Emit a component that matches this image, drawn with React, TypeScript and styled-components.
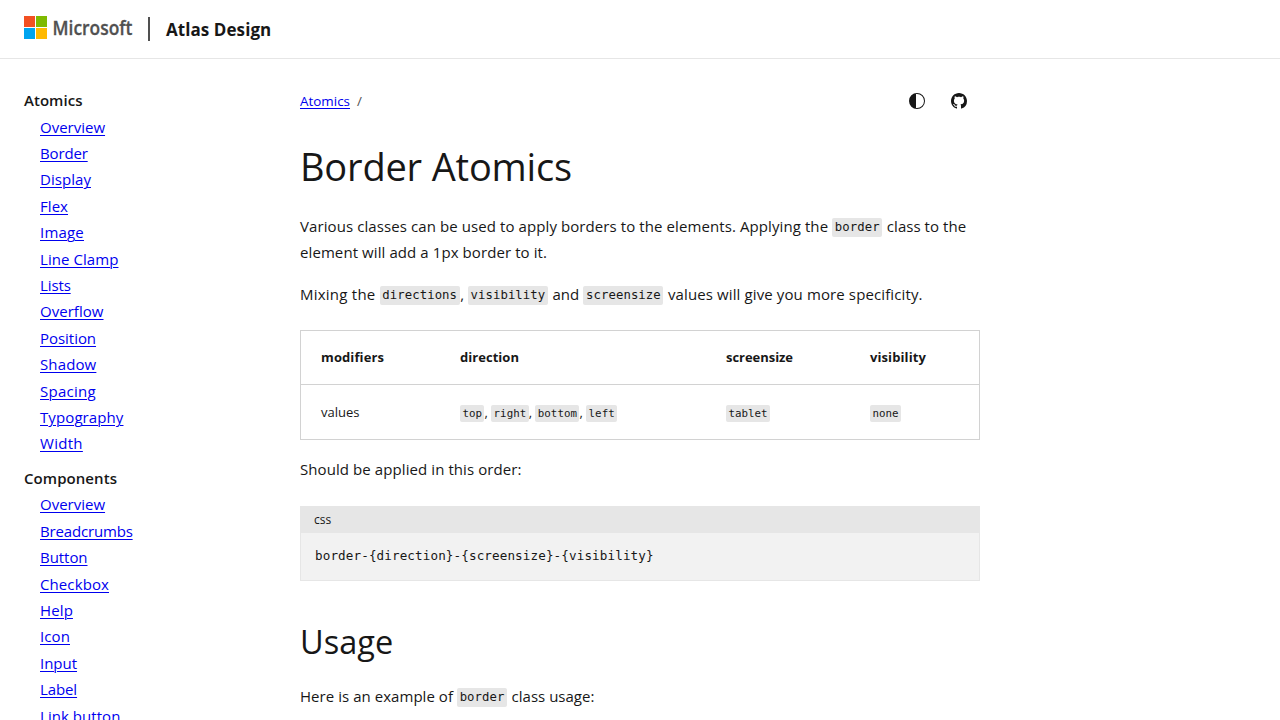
import React from 'react';
import styled, { createGlobalStyle } from 'styled-components';

const GlobalStyle = createGlobalStyle`
  *, *::before, *::after { box-sizing: border-box; }
  html { overflow: hidden; }
  body {
    margin: 0;
    height: 720px;
    overflow: hidden;
    background: #fff;
    color: #171717;
    font: 400 15px/26.4px "Open Sans", "Noto Sans", sans-serif;
  }
`;

const Track = styled.span<{ $ls: number }>`
  letter-spacing: ${(p) => p.$ls}px;
`;

const Header = styled.header`
  display: flex;
  align-items: center;
  height: 59px;
  padding: 0 24px;
  border-bottom: 1px solid #e6e6e6;
`;

const Logo = styled.svg`
  display: block;
  width: 109px;
  height: 24px;
  margin-bottom: 3px;
  overflow: visible;
`;

const Divider = styled.span`
  width: 2px;
  height: 24px;
  margin: 0 16px 0 15px;
  background: #505050;
`;

const SiteName = styled.span`
  padding-top: 3px;
  font-size: 17px;
  font-weight: 700;
  letter-spacing: 0.07px;
`;

const Body = styled.div`
  display: flex;
`;

const Sidebar = styled.nav`
  width: 300px;
  padding: 28.2px 24px 0;
`;

const SectionTitle = styled.div<{ $ls: number }>`
  font-weight: 600;
  letter-spacing: ${(p) => p.$ls}px;
`;

const LinkList = styled.ul`
  margin: 0 0 8px;
  padding: 0 0 0 16px;
  list-style: none;
`;

const Link = styled.a<{ $ls?: number; $small?: boolean }>`
  color: #0000ee;
  font-size: ${(p) => (p.$small ? 13.4 : 15)}px;
  letter-spacing: ${(p) => p.$ls ?? 0}px;
  text-decoration: underline;
  text-decoration-thickness: 1px;
  text-underline-offset: 2px;
`;

const Main = styled.main`
  width: 680px;
`;

const TopBar = styled.div`
  display: flex;
  align-items: center;
  justify-content: space-between;
  height: 38px;
  margin-top: 23px;
`;

const Crumbs = styled.div`
  display: flex;
  gap: 7px;
  color: #505050;
  font-size: 13.4px;
`;

const Actions = styled.div`
  display: flex;
  gap: 26px;
  padding-right: 13px;
`;

const Icon = styled.svg`
  display: block;
  width: 16px;
  height: 16px;
  fill: #171717;
`;

const Title = styled.h1`
  margin: 20px 0 21px;
  font-size: 38px;
  font-weight: 400;
  line-height: 52px;
  letter-spacing: -0.18px;
`;

const Subtitle = styled.h2`
  margin: 39px 0 19px;
  font-size: 32.5px;
  font-weight: 400;
  line-height: 44px;
  letter-spacing: 0;
`;

const Text = styled.p`
  margin: 0 0 16px;
  line-height: 26px;
`;

const Code = styled.code<{ $small?: boolean }>`
  display: inline-block;
  height: ${(p) => (p.$small ? 17 : 19)}px;
  margin-right: ${(p) => (p.$small ? 0 : 0.5)}px;
  padding: 0 ${(p) => (p.$small ? 2.4 : 2.7)}px;
  border-radius: 2px;
  background: #e6e6e6;
  font-family: "DejaVu Sans Mono", monospace;
  font-size: ${(p) => (p.$small ? 10.8 : 12.3)}px;
  line-height: ${(p) => (p.$small ? 17 : 19)}px;
  letter-spacing: ${(p) => (p.$small ? 0.04 : 0.07)}px;
  vertical-align: ${(p) => (p.$small ? 0 : 1)}px;
`;

const Table = styled.table`
  width: 100%;
  margin: 23px 0 16px;
  border: 1px solid #d2d2d2;
  border-spacing: 0;
  table-layout: fixed;
  font-size: 13px;
  text-align: left;
`;

const Row = styled.tr`
  height: 53px;
  & + & td { border-top: 1px solid #d2d2d2; height: 55px; }
`;

const Col = styled.col<{ $w: number }>`
  width: ${(p) => p.$w}px;
`;

const Th = styled.th<{ $ls: number }>`
  padding: 0 0 0 20px;
  font-weight: 700;
  letter-spacing: ${(p) => p.$ls}px;
`;

const Td = styled.td`
  padding: 0 0 0 20px;
`;

const CodeBlock = styled.div`
  margin-top: 24px;
  border: 1px solid #e6e6e6;
  background: #f2f2f2;
`;

const CodeHeader = styled.div`
  height: 26px;
  padding-left: 13px;
  background: #e6e6e6;
  font-size: 12px;
  line-height: 25px;
`;

const Pre = styled.pre`
  margin: 0;
  height: 47px;
  padding: 10px 14px;
  font-family: "DejaVu Sans Mono", monospace;
  font-size: 12.6px;
  line-height: 26px;
  letter-spacing: 0.115px;
`;

type Item = [label: string, tracking: number];

const atomics: Item[] = [
  ['Overview', 0], ['Border', -0.15], ['Display', 0.05], ['Flex', 0.05], ['Image', 0.2],
  ['Line Clamp', 0.07], ['Lists', -0.12], ['Overflow', 0.04], ['Position', -0.04],
  ['Shadow', 0.13], ['Spacing', 0.25], ['Typography', 0.1], ['Width', 0.3],
];

const components: Item[] = [
  ['Overview', 0], ['Breadcrumbs', -0.17], ['Button', -0.05], ['Checkbox', 0.1], ['Help', 0.12],
  ['Icon', 0.1], ['Input', -0.02], ['Label', -0.1], ['Link button', 0.05],
];

function NavSection({ title, ls, items }: { title: string; ls: number; items: Item[] }) {
  return (
    <>
      <SectionTitle $ls={ls}>{title}</SectionTitle>
      <LinkList>
        {items.map(([label, t]) => (
          <li key={label}><Link href="#" $ls={t}>{label}</Link></li>
        ))}
      </LinkList>
    </>
  );
}

export default function App() {
  return (
    <>
      <GlobalStyle />
      <Header>
        <Logo viewBox="0 0 109 24">
          <rect width="11" height="11" fill="#f25022" />
          <rect x="12" width="11" height="11" fill="#7fba00" />
          <rect y="12" width="11" height="11" fill="#00a4ef" />
          <rect x="12" y="12" width="11" height="11" fill="#ffb900" />
          <text x="28.5" y="18.6" fill="#505050" stroke="#505050" strokeWidth="0.3" fontSize="19.2" fontWeight="600" textLength="80" lengthAdjust="spacingAndGlyphs">Microsoft</text>
        </Logo>
        <Divider />
        <SiteName>Atlas Design</SiteName>
      </Header>
      <Body>
        <Sidebar>
          <NavSection title="Atomics" ls={0.04} items={atomics} />
          <NavSection title="Components" ls={0.06} items={components} />
        </Sidebar>
        <Main>
          <TopBar>
            <Crumbs><Link href="#" $small $ls={0.02}>Atomics</Link><span>/</span></Crumbs>
            <Actions>
              <Icon viewBox="0 0 16 16">
                <path d="M8 0a8 8 0 1 0 0 16A8 8 0 0 0 8 0Zm0 1a7 7 0 0 1 0 14H7V1Z" fillRule="evenodd" />
              </Icon>
              <Icon viewBox="0 0 16 16">
                <path d="M8 0C3.58 0 0 3.58 0 8c0 3.54 2.29 6.53 5.47 7.59.4.07.55-.17.55-.38 0-.19-.01-.82-.01-1.49-2.01.37-2.53-.49-2.69-.94-.09-.23-.48-.94-.82-1.13-.28-.15-.68-.52-.01-.53.63-.01 1.08.58 1.23.82.72 1.21 1.87.87 2.33.66.07-.52.28-.87.51-1.07-1.78-.2-3.64-.89-3.64-3.95 0-.87.31-1.59.82-2.15-.08-.2-.36-1.02.08-2.12 0 0 .67-.21 2.2.82.64-.18 1.32-.27 2-.27.68 0 1.36.09 2 .27 1.53-1.04 2.2-.82 2.2-.82.44 1.1.16 1.92.08 2.12.51.56.82 1.27.82 2.15 0 3.07-1.87 3.75-3.65 3.95.29.25.54.73.54 1.48 0 1.07-.01 1.93-.01 2.2 0 .21.15.46.55.38A8.013 8.013 0 0 0 16 8c0-4.42-3.58-8-8-8Z" />
              </Icon>
            </Actions>
          </TopBar>
          <Title>Border Atomics</Title>
          <Text>
            <Track $ls={0.09}>Various classes can be used to apply borders to the elements. Applying the </Track>
            <Code>border</Code>
            <Track $ls={0.05}> class to the<br /></Track>
            <Track $ls={0.087}>element will add a 1px border to it.</Track>
          </Text>
          <Text>
            <Track $ls={0.237}>Mixing the </Track><Code>directions</Code>
            <Track $ls={-0.1}>, </Track><Code>visibility</Code>
            <Track $ls={0.08}> and </Track><Code>screensize</Code>
            <Track $ls={0.115}> values will give you more specificity.</Track>
          </Text>
          <Table>
            <colgroup><Col $w={139} /><Col $w={266} /><Col $w={144} /><col /></colgroup>
            <tbody>
              <Row>
                <Th $ls={0.11}>modifiers</Th>
                <Th $ls={0.04}>direction</Th>
                <Th $ls={-0.04}>screensize</Th>
                <Th $ls={0.1}>visibility</Th>
              </Row>
              <Row>
                <Td>values</Td>
                <Td>
                  <Code $small>top</Code>, <Code $small>right</Code>, <Code $small>bottom</Code>, <Code $small>left</Code>
                </Td>
                <Td><Code $small>tablet</Code></Td>
                <Td><Code $small>none</Code></Td>
              </Row>
            </tbody>
          </Table>
          <Text><Track $ls={0.083}>Should be applied in this order:</Track></Text>
          <CodeBlock>
            <CodeHeader>css</CodeHeader>
            <Pre>{'border-{direction}-{screensize}-{visibility}'}</Pre>
          </CodeBlock>
          <Subtitle>Usage</Subtitle>
          <Text>
            <Track $ls={0.046}>Here is an example of </Track>
            <Code>border</Code>
            <Track $ls={0.01}> class usage:</Track>
          </Text>
        </Main>
      </Body>
    </>
  );
}
